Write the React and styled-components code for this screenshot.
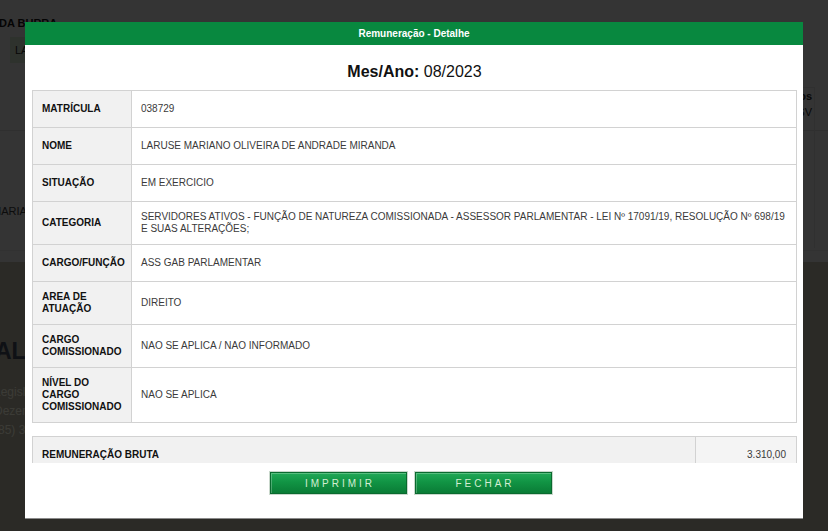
import React from "react";
import styled, { createGlobalStyle } from "styled-components";

const Global = createGlobalStyle`
  html, body { margin: 0; padding: 0; }
  body { font-family: "Liberation Sans", Arial, sans-serif; background: #333; }
  #root { width: 828px; height: 531px; }
`;

const Viewport = styled.div`
  position: relative;
  width: 828px;
  height: 531px;
  overflow: hidden;
  font-family: "Liberation Sans", Arial, sans-serif;
`;

/* ---------- dimmed page behind the dialog ---------- */
const Page = styled.div`
  height: 531px;
  display: flex;
  flex-direction: column;
  background: linear-gradient(to bottom, #cdcdcd 0, #cdcdcd 262px, #aaa697 262px);
`;

const PageHead = styled.div`
  display: flex;
  justify-content: space-between;
  padding-top: 17px;
  height: 113px;
  border-bottom: 1px solid #bdbdbd;
`;

const HeadLeft = styled.div`
  display: flex;
  flex-direction: column;
  gap: 8px;
`;

const Crumb = styled.div`
  font-size: 11px;
  font-weight: 700;
  color: #111;
  margin-left: -1px;
`;

const Chip = styled.div`
  margin-left: 10px;
  width: 200px;
  height: 26px;
  line-height: 26px;
  padding-left: 5px;
  font-size: 11px;
  color: #222;
  background: #b9c7b4;
`;

const HeadRight = styled.div`
  margin-top: 70px;
  margin-right: 13px;
  text-align: right;
  font-size: 11px;
  line-height: 16px;
  color: #222;
  padding: 0 2px;
  border: 1px solid #c0c0c0;
  border-bottom: none;
  height: 160px;
  b { font-weight: 700; }
`;

const PageRow = styled.div`
  height: 120px;
  box-sizing: border-box;
  padding-top: 74px;
  font-size: 11px;
  color: #333;
  margin-left: -8px;
  border-bottom: 1px solid #c2c2c2;
`;

const Brand = styled.div`
  margin-top: 86px;
  margin-left: -5px;
  font-size: 23px;
  line-height: 28px;
  font-weight: 700;
  color: #3c4456;
`;

const Contact = styled.div`
  margin-top: 18px;
  margin-left: -6px;
  font-size: 12px;
  line-height: 19px;
  color: #ecebd8;
`;

const Overlay = styled.div`
  position: absolute;
  inset: 0;
  background: rgba(0, 0, 0, 0.75);
`;

/* ---------- dialog ---------- */
const Modal = styled.div`
  position: absolute;
  left: 25px;
  top: 22px;
  width: 778px;
  height: 496px;
  background: #fff;
  display: flex;
  flex-direction: column;
  box-shadow: 0 1px 0 #8a8a8a;
`;

const ModalHeader = styled.div`
  height: 23px;
  line-height: 23px;
  background: #08883f;
  color: #fff;
  font-size: 10px;
  font-weight: 700;
  text-align: center;
`;

const ModalBody = styled.div`
  flex: 1;
  overflow: hidden;
  padding: 0 6px 0 7px;
`;

const Title = styled.h2`
  margin: 0;
  padding: 18px 0 9px;
  line-height: 18px;
  font-size: 16px;
  font-weight: 400;
  color: #111;
  text-align: center;
  b { font-weight: 700; }
`;

const Table = styled.table`
  width: 100%;
  table-layout: fixed;
  border-collapse: collapse;
  border: 1px solid #d2d2d2;
  font-size: 10px;
  line-height: 12px;
  margin-top: ${(p) => p.$gap || 0}px;
`;

const Row = styled.tr`
  height: 37px;
`;

const Label = styled.th`
  width: 99px;
  box-sizing: border-box;
  padding: 9px 4px 9px 9px;
  text-align: left;
  font-weight: 700;
  color: #111;
  background: #f1f1f1;
  border: 1px solid #d2d2d2;
  vertical-align: middle;
`;

const Value = styled.td`
  padding: 9px 5px 9px 9px;
  color: #3a3a3a;
  border: 1px solid #d2d2d2;
  vertical-align: middle;
  background: ${(p) => (p.$shade ? "#f4f4f4" : "#fff")};
  text-align: ${(p) => (p.$right ? "right" : "left")};
`;

const WideLabel = styled(Label)`
  width: auto;
  padding-top: 12px;
  padding-bottom: 12px;
`;

const AmountCell = styled(Value)`
  width: 101px;
  box-sizing: border-box;
  padding-right: 10px;
`;

const Footer = styled.div`
  height: 55px;
  display: flex;
  justify-content: center;
  align-items: flex-start;
  gap: 8px;
  padding: 9px 6px 0 0;
  box-sizing: border-box;
`;

const Button = styled.button`
  width: 137px;
  height: 22px;
  padding: 0 0 0 3px;
  border: 1px solid #0a6a2f;
  background: linear-gradient(to bottom, #21a957 0%, #119444 45%, #0a7c36 100%);
  box-shadow: inset 1px 1px 0 rgba(255, 255, 255, 0.25), 0 0 0 1px #c9d8cc;
  color: #d3eed3;
  font-family: "Liberation Sans", Arial, sans-serif;
  font-size: 10px;
  letter-spacing: 3px;
  cursor: pointer;
`;

const rows = [
  ["MATRÍCULA", "038729"],
  ["NOME", "LARUSE MARIANO OLIVEIRA DE ANDRADE MIRANDA"],
  ["SITUAÇÃO", "EM EXERCICIO"],
  [
    "CATEGORIA",
    "SERVIDORES ATIVOS - FUNÇÃO DE NATUREZA COMISSIONADA - ASSESSOR PARLAMENTAR - LEI Nº 17091/19, RESOLUÇÃO Nº 698/19 E SUAS ALTERAÇÕES;",
  ],
  ["CARGO/FUNÇÃO", "ASS GAB PARLAMENTAR"],
  ["AREA DE ATUAÇÃO", "DIREITO"],
  ["CARGO COMISSIONADO", "NAO SE APLICA / NAO INFORMADO"],
  ["NÍVEL DO CARGO COMISSIONADO", "NAO SE APLICA"],
];

export default function App() {
  return (
    <Viewport>
      <Global />
      <Page>
        <PageHead>
          <HeadLeft>
            <Crumb>DA BURRA</Crumb>
            <Chip>LA</Chip>
          </HeadLeft>
          <HeadRight>
            <b>Vínculos</b>
            <br />
            CSV
          </HeadRight>
        </PageHead>
        <PageRow>MARIANO</PageRow>
        <Brand>ALECE</Brand>
        <Contact>
          Legislativa
          <br />
          Dezembro
          <br />
          (85) 3277
        </Contact>
      </Page>
      <Overlay />
      <Modal>
        <ModalHeader>Remuneração - Detalhe</ModalHeader>
        <ModalBody>
          <Title>
            <b>Mes/Ano:</b> 08/2023
          </Title>
          <Table>
            <tbody>
              {rows.map(([k, v]) => (
                <Row key={k}>
                  <Label>{k}</Label>
                  <Value>{v}</Value>
                </Row>
              ))}
            </tbody>
          </Table>
          <Table $gap={13}>
            <tbody>
              <Row>
                <WideLabel>REMUNERAÇÃO BRUTA</WideLabel>
                <AmountCell $shade $right>
                  3.310,00
                </AmountCell>
              </Row>
            </tbody>
          </Table>
        </ModalBody>
        <Footer>
          <Button>IMPRIMIR</Button>
          <Button>FECHAR</Button>
        </Footer>
      </Modal>
    </Viewport>
  );
}
